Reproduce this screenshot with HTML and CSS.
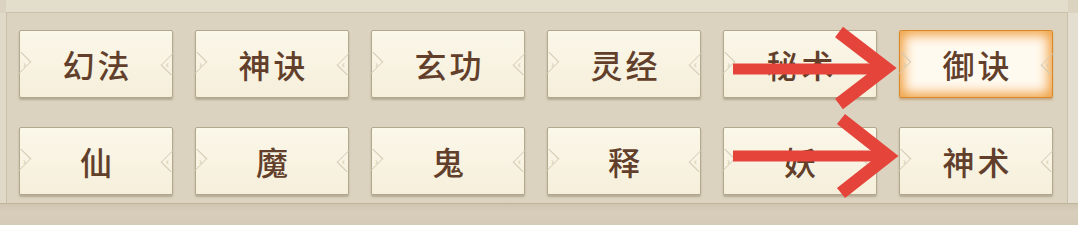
FILE: index.html
```html
<!DOCTYPE html>
<html lang="zh-CN">
<head>
    <meta charset="UTF-8">
    <title>功法分类</title>
    <link rel="stylesheet" href="styles.css">
</head>
<body>
    <div class="screen">
        <div class="top-band"></div>

        <div class="panel">
            <div class="tab-grid">
                <div class="tab"><span class="notch-l"></span>幻法<span class="notch-r"></span></div>
                <div class="tab"><span class="notch-l"></span>神诀<span class="notch-r"></span></div>
                <div class="tab"><span class="notch-l"></span>玄功<span class="notch-r"></span></div>
                <div class="tab"><span class="notch-l"></span>灵经<span class="notch-r"></span></div>
                <div class="tab"><span class="notch-l"></span>秘术<span class="notch-r"></span></div>
                <div class="tab active"><span class="notch-l"></span>御诀<span class="notch-r"></span></div>

                <div class="tab"><span class="notch-l"></span>仙<span class="notch-r"></span></div>
                <div class="tab"><span class="notch-l"></span>魔<span class="notch-r"></span></div>
                <div class="tab"><span class="notch-l"></span>鬼<span class="notch-r"></span></div>
                <div class="tab"><span class="notch-l"></span>释<span class="notch-r"></span></div>
                <div class="tab"><span class="notch-l"></span>妖<span class="notch-r"></span></div>
                <div class="tab"><span class="notch-l"></span>神术<span class="notch-r"></span></div>
            </div>
        </div>

        <div class="bottom-band"></div>

        <!-- annotation arrows drawn over the tabs -->
        <svg class="arrows" width="1078" height="225" viewBox="0 0 1078 225">
            <g fill="none" stroke="#e5443a" stroke-width="13" stroke-linejoin="miter">
                <line x1="733" y1="69" x2="882" y2="69" stroke-width="11"/>
                <polyline points="839,32 886,68 839,104"/>
                <line x1="733" y1="156" x2="884" y2="156" stroke-width="11"/>
                <polyline points="841,119 888,156 841,193"/>
            </g>
        </svg>
    </div>
</body>
</html>
```

FILE: styles.css
```css
* {
    margin: 0;
    padding: 0;
    box-sizing: border-box;
}

:root {
    --bg: #dbd3bf;
    --bg-light: #e3ddcc;
    --line: #cbc1aa;
    --tab-border: #b3a88e;
    --text: #623f2b;
    --notch: #d2c9b2;
}

body {
    background-color: var(--bg);
    font-family: "Noto Sans CJK SC", "Noto Sans", sans-serif;
}

.screen {
    position: relative;
    width: 1078px;
    height: 225px;
    overflow: hidden;
    display: flex;
    flex-direction: column;
    background-color: var(--bg);
}

.top-band {
    height: 13px;
    background-color: var(--bg-light);
    border-bottom: 1px solid var(--line);
    margin-left: 6px;
    margin-right: 10px;
}

/* Panel holding the tab buttons */
.panel {
    flex: 1;
    border-left: 6px solid #e0d9c7;
    border-right: 10px solid #e3decf;
    padding: 17px 0 0 13px;
    position: relative;
}

.panel::before {
    content: "";
    position: absolute;
    left: 0;
    top: 0;
    bottom: 0;
    width: 1px;
    background: var(--line);
}

.panel::after {
    content: "";
    position: absolute;
    right: 0;
    top: 0;
    bottom: 0;
    width: 1px;
    background: var(--line);
}

.tab-grid {
    display: grid;
    grid-template-columns: repeat(6, 154px);
    grid-template-rows: 68px 68px;
    column-gap: 22px;
    row-gap: 29px;
}

.tab {
    position: relative;
    display: flex;
    align-items: center;
    justify-content: center;
    background: linear-gradient(#fbf7e9, #f5efdb);
    border: 1px solid var(--tab-border);
    border-radius: 2px;
    box-shadow: 0 2px 2px rgba(110, 95, 70, 0.35);
    color: var(--text);
    font-size: 32px;
    font-weight: 500;
    letter-spacing: 3px;
    padding-left: 3px;
}

.tab.active {
    background: #fffaf0;
    border: 1px solid #d9882a;
    box-shadow: inset 0 0 12px 4px rgba(238, 152, 52, 0.9), 0 2px 2px rgba(160, 100, 40, 0.35);
}

/* small chevron notches on each side */
.notch-l,
.notch-r {
    position: absolute;
    top: 50%;
    width: 13px;
    height: 26px;
    margin-top: -13px;
}

.notch-l {
    left: 0;
}

.notch-l::before,
.notch-r::before {
    content: "";
    position: absolute;
    top: 3px;
    width: 18px;
    height: 18px;
    border-top: 1px solid var(--notch);
    border-right: 1px solid var(--notch);
    transform: rotate(45deg) scaleX(0.75);
}

.notch-l::before {
    left: -10px;
}

.notch-r {
    right: 0;
}

.notch-r::before {
    right: -10px;
    transform: rotate(-135deg) scaleX(0.75);
}

.notch-l::after,
.notch-r::after {
    position: absolute;
    top: 5px;
    font-size: 10px;
    font-weight: 400;
    letter-spacing: 0;
    color: #cfc6ae;
}

.notch-l::after {
    content: "›";
    left: 3px;
}

.notch-r::after {
    content: "‹";
    right: 3px;
}

.bottom-band {
    height: 22px;
    background: linear-gradient(#cfc5b1, #d8cebc 40%, #d4cab6);
    border-top: 1px solid #bfb49c;
}

.arrows {
    position: absolute;
    left: 0;
    top: 0;
    pointer-events: none;
}
```
